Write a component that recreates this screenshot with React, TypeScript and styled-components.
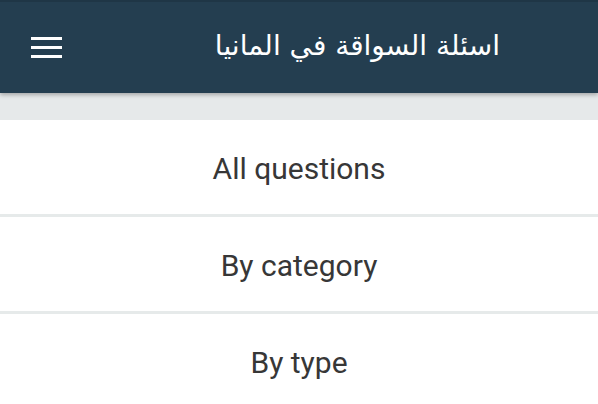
import React from "react";
import styled, { createGlobalStyle } from "styled-components";

const Global = createGlobalStyle`
  html, body { margin: 0; padding: 0; background: #ffffff; }
  body { width: 598px; height: 404px; overflow: hidden; font-family: Roboto, "Liberation Sans", sans-serif; }
`;

const Page = styled.div`
  width: 598px;
  height: 404px;
  display: flex;
  flex-direction: column;
  background: #ffffff;
  overflow: hidden;
`;

const Toolbar = styled.header`
  position: relative;
  z-index: 2;
  height: 93px;
  flex: 0 0 93px;
  box-sizing: border-box;
  border-top: 2px solid #1f3646;
  background: #243e50;
  display: flex;
  align-items: center;
  padding: 0 98px 0 31px;
  box-shadow: 0 2px 4px rgba(0, 0, 0, 0.28);
`;

const MenuButton = styled.div`
  width: 31px;
  display: flex;
  flex-direction: column;
  gap: 6px;
`;

const MenuLine = styled.span`
  display: block;
  height: 3px;
  background: #ffffff;
`;

const Title = styled.h1`
  flex: 1;
  margin: -3px 0 0 0;
  text-align: right;
  direction: rtl;
  color: #ffffff;
  font-family: "DejaVu Sans", "Noto Sans", sans-serif;
  font-weight: normal;
  font-size: 28px;
  line-height: 1;
`;

const Band = styled.div`
  height: 27px;
  flex: 0 0 27px;
  background: #e6e9ea;
`;

const List = styled.div`
  display: flex;
  flex-direction: column;
`;

const Row = styled.div<{ $last?: boolean }>`
  height: 92px;
  flex: 0 0 auto;
  display: flex;
  align-items: center;
  justify-content: center;
  border-bottom: ${(p) => (p.$last ? "none" : "3px solid #e6eaea")};
  color: #373737;
  font-family: Roboto, "Liberation Sans", sans-serif;
  font-size: 30px;
  padding-top: 2px;
`;

export default function App() {
  const items = ["All questions", "By category", "By type"];
  return (
    <Page>
      <Global />
      <Toolbar>
        <MenuButton>
          <MenuLine />
          <MenuLine />
          <MenuLine />
        </MenuButton>
        <Title>اسئلة السواقة في المانيا</Title>
      </Toolbar>
      <Band />
      <List>
        {items.map((t, i) => (
          <Row key={t} $last={i === items.length - 1}>
            {t}
          </Row>
        ))}
      </List>
    </Page>
  );
}
